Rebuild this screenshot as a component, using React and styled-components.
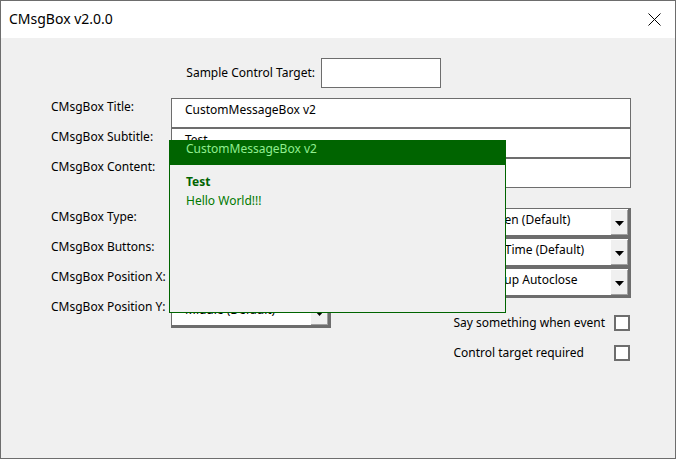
import React from "react";
import styled, { createGlobalStyle } from "styled-components";

const FONT = `"Noto Sans", "Open Sans", "Liberation Sans", sans-serif`;
const EDGE = "#6d6d6d";
const GREEN = "#006400";

const Global = createGlobalStyle`
  html, body {
    margin: 0;
    padding: 0;
    background: #f0f0f0;
  }
  body {
    font-family: ${FONT};
    font-size: 12px;
    color: #000;
  }
`;

const Window = styled.div`
  position: relative;
  box-sizing: border-box;
  width: 676px;
  height: 459px;
  border: 1px solid ${EDGE};
  background: #f0f0f0;
  display: flex;
  flex-direction: column;
`;

const TitleBar = styled.div`
  height: 37px;
  background: #fff;
  display: flex;
  align-items: center;
  justify-content: space-between;
  padding: 0 14px 0 8px;
`;

const TitleText = styled.div`
  font-size: 14px;
  margin-top: -2px;
`;

const Body = styled.div`
  flex: 1;
  padding: 20px 0 0 50px;
  display: flex;
  flex-direction: column;
`;

const TargetRow = styled.div`
  display: grid;
  grid-template-columns: 140px 120px;
  align-items: center;
  gap: 6px;
  margin-left: 124px;
`;

const Label = styled.div`
  white-space: nowrap;
  line-height: 16px;
  padding-top: ${p => p.top || 0}px;
  text-align: ${p => p.right ? "right" : "left"};
`;

const TextBox = styled.div`
  box-sizing: border-box;
  width: ${p => p.w || 460}px;
  height: 30px;
  background: #fff;
  border: 1px solid ${EDGE};
  padding: 3px 0 0 13px;
  line-height: 16px;
  white-space: nowrap;
  overflow: hidden;
`;

const Form = styled.div`
  display: grid;
  grid-template-columns: 120px 460px;
  margin-top: 10px;
`;

const Spacer = styled.div`
  grid-column: 1 / 3;
  height: 20px;
`;

const Combo = styled.div`
  box-sizing: border-box;
  width: ${p => p.w || 460}px;
  height: 30px;
  background: #fff;
  border-top: 1px solid ${EDGE};
  border-left: 1px solid ${EDGE};
  border-right: 3px solid ${EDGE};
  border-bottom: 3px solid ${EDGE};
  display: flex;
  align-items: stretch;
`;

const ComboText = styled.div`
  flex: 1;
  padding: 3px 0 0 13px;
  line-height: 16px;
  white-space: nowrap;
  overflow: hidden;
`;

const DropButton = styled.div`
  width: 17px;
  background: #f0f0f0;
  border-left: 1px solid #fff;
  border-top: 1px solid #fff;
  box-shadow: inset -1px -1px 0 #a0a0a0;
  display: flex;
  align-items: center;
  justify-content: center;
  padding-top: 1px;
`;

const LastRow = styled.div`
  display: flex;
  align-items: flex-start;
`;

const Checks = styled.div`
  margin-left: auto;
  margin-top: 17px;
  margin-right: 1px;
  display: grid;
  grid-template-columns: auto 16px;
  column-gap: 9px;
  row-gap: 14px;
  align-items: center;
`;

const CheckLabel = styled.span`
  white-space: nowrap;
  line-height: 16px;
`;

const CheckBox = styled.span`
  box-sizing: border-box;
  width: 16px;
  height: 16px;
  background: #fff;
  border: 2px solid ${EDGE};
`;

const Popup = styled.div`
  position: absolute;
  left: 168px;
  top: 139px;
  box-sizing: border-box;
  width: 337px;
  height: 173px;
  border: 1px solid ${GREEN};
  background: #f0f0f0;
`;

const PopupHeader = styled.div`
  height: 24px;
  margin: -1px -1px 0;
  background: ${GREEN};
  color: #90ee90;
  padding: 1px 0 0 17px;
  line-height: 16px;
`;

const PopupBody = styled.div`
  padding: 7px 0 0 16px;
  line-height: 19px;
`;

const PopupSubtitle = styled.div`
  font-weight: bold;
  color: ${GREEN};
`;

const PopupContent = styled.div`
  color: #007800;
`;

const Arrow = () => (
  <svg width="9" height="5" viewBox="0 0 9 5">
    <path d="M0 0H9L4.5 5Z" fill="#000" />
  </svg>
);

const Close = () => (
  <svg width="13" height="13" viewBox="0 0 13 13">
    <path d="M0.5 0.5L12.5 12.5M12.5 0.5L0.5 12.5" stroke="#000" strokeWidth="1" />
  </svg>
);

const Select = ({ w, children }) => (
  <Combo w={w}>
    <ComboText>{children}</ComboText>
    <DropButton><Arrow /></DropButton>
  </Combo>
);

export default function App() {
  return (
    <>
      <Global />
      <Window>
        <TitleBar>
          <TitleText>CMsgBox v2.0.0</TitleText>
          <Close />
        </TitleBar>
        <Body>
          <TargetRow>
            <Label right>Sample Control Target:</Label>
            <TextBox w={120} />
          </TargetRow>
          <Form>
            <Label top={1}>CMsgBox Title:</Label>
            <TextBox>CustomMessageBox v2</TextBox>
            <Label top={1}>CMsgBox Subtitle:</Label>
            <TextBox>Test</TextBox>
            <Label top={1}>CMsgBox Content:</Label>
            <TextBox>Hello World!!!</TextBox>
            <Spacer />
            <Label top={1}>CMsgBox Type:</Label>
            <Select>Information, the message box is shown in the active screen (Default)</Select>
            <Label top={1}>CMsgBox Buttons:</Label>
            <Select>No button, the message box closes by itself after a short Time (Default)</Select>
            <Label top={1}>CMsgBox Position X:</Label>
            <Select>Center, near the control target, the message box is a popup Autoclose</Select>
            <Label top={1}>CMsgBox Position Y:</Label>
            <LastRow>
              <Select w={160}>Middle (Default)</Select>
              <Checks>
                <CheckLabel>Say something when event</CheckLabel>
                <CheckBox />
                <CheckLabel>Control target required</CheckLabel>
                <CheckBox />
              </Checks>
            </LastRow>
          </Form>
        </Body>
        <Popup>
          <PopupHeader>CustomMessageBox v2</PopupHeader>
          <PopupBody>
            <PopupSubtitle>Test</PopupSubtitle>
            <PopupContent>Hello World!!!</PopupContent>
          </PopupBody>
        </Popup>
      </Window>
    </>
  );
}
